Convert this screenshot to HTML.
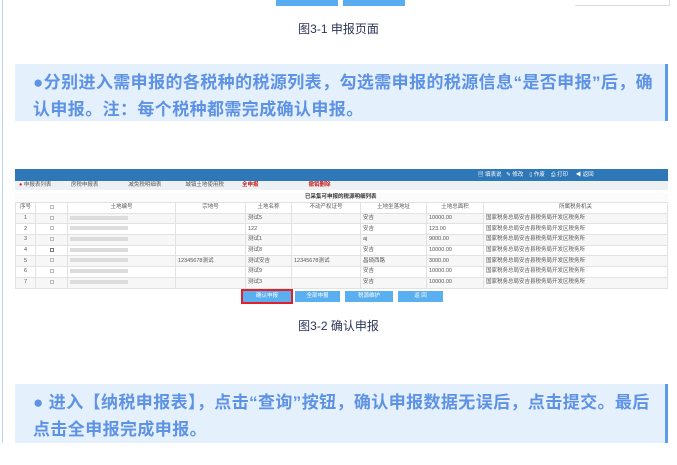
<!DOCTYPE html>
<html><head><meta charset="utf-8"><style>
*{margin:0;padding:0;box-sizing:border-box}
body{width:677px;height:465px;background:#fff;position:relative;overflow:hidden;font-family:"Liberation Sans","Noto Sans CJK SC",sans-serif}
.a{position:absolute}
.cap{position:absolute;left:0;width:677px;text-align:center;font-size:12px;color:#2c3456}
.box{position:absolute;left:15px;width:653px;background:#e4f0fb;border-right:3px solid #5b9be8;color:#5e92e4;font-weight:bold;font-size:17px;line-height:27px;padding:5px 4px 0 18px;letter-spacing:0.4px}
.t{font-size:5.5px;color:#555;white-space:nowrap;line-height:10px}
table{border-collapse:collapse;position:absolute;left:15px;top:202px;width:653px;table-layout:fixed}
td{border:1px solid #e2e2e2;height:10.7px;font-size:5.5px;color:#555;padding:0 2px;white-space:nowrap;overflow:hidden;line-height:9px}
tr:nth-child(odd) td{background:#fff}
tr:nth-child(even) td{background:#f7f7f7}
.c{text-align:center}
.blur{display:inline-block;width:58px;height:4px;background:#dcdcdc;vertical-align:middle}
.cb{display:inline-block;width:4px;height:4px;border:1px solid #bbb;vertical-align:middle}
.btn{position:absolute;top:291px;height:11px;background:#5aaff0;color:#fff;font-size:5.5px;text-align:center;line-height:11px}
</style></head><body>
<div class="a" style="left:2px;top:0;width:1px;height:443px;background:#b9d3f2"></div>
<div class="a" style="left:276px;top:0;width:62px;height:6px;background:#58acf0"></div>
<div class="a" style="left:343px;top:0;width:62px;height:6px;background:#58acf0"></div>
<div class="a" style="left:575px;top:0;width:95px;height:6px;border-bottom:1px solid #ddd;border-right:1px solid #ddd"></div>
<div class="cap" style="top:20px">图3-1 申报页面</div>
<div class="box" style="top:64px;height:57px">●分别进入需申报的各税种的税源列表，勾选需申报的税源信息“是否申报”后，确认申报。注：每个税种都需完成确认申报。</div>

<div class="a" style="left:15px;top:169px;width:653px;height:12px;background:#2f78b8"></div>
<div class="a t" style="left:478px;top:170px;color:#fff">▤ 填表说 &nbsp;&nbsp;✎ 修改 &nbsp;&nbsp;&nbsp;▯ 作废 &nbsp;&nbsp;&nbsp;⎙ 打印 &nbsp;&nbsp;&nbsp;&nbsp;◀ 返回</div>
<div class="a" style="left:15px;top:181px;width:653px;height:9px;background:#eef1f4"></div>
<div class="a t" style="left:19px;top:180px"><span style="color:#e0201c">●</span> 申报表列表 <span style="margin-left:18px">房税申报表</span><span style="margin-left:30px">减免税明细表</span><span style="margin-left:24px">城镇土地使用税</span><span style="margin-left:18px;color:#c8201c;font-weight:bold">全申报</span><span style="margin-left:50px;color:#c8201c;font-weight:bold">撤销删除</span></div>
<div class="a" style="left:15px;top:193px;width:653px;height:9px;background:#fbfbfb"></div>
<div class="a t" style="left:305px;top:192px;font-weight:bold;color:#333">已采集可申报的税源明细列表</div>
<table>
<colgroup><col style="width:20px"><col style="width:32px"><col style="width:108px"><col style="width:70px"><col style="width:46px"><col style="width:69px"><col style="width:66px"><col style="width:57px"><col></colgroup>
<tr><td class="c">序号</td><td class="c"><span class="cb"></span></td><td class="c">土地编号</td><td class="c">宗地号</td><td class="c">土地名称</td><td class="c">不动产权证号</td><td class="c">土地坐落地址</td><td class="c">土地总面积</td><td class="c">所属税务机关</td></tr>
<tr><td class="c">1</td><td class="c"><span class="cb"></span></td><td><span class="blur"></span></td><td></td><td>测试5</td><td></td><td>安吉</td><td>10000.00</td><td>国家税务总局安吉县税务局开发区税务所</td></tr>
<tr><td class="c">2</td><td class="c"><span class="cb"></span></td><td><span class="blur"></span></td><td></td><td>122</td><td></td><td>安吉</td><td>123.00</td><td>国家税务总局安吉县税务局开发区税务所</td></tr>
<tr><td class="c">3</td><td class="c"><span class="cb"></span></td><td><span class="blur"></span></td><td></td><td>测试1</td><td></td><td>aj</td><td>9000.00</td><td>国家税务总局安吉县税务局开发区税务所</td></tr>
<tr><td class="c">4</td><td class="c"><span class="cb" style="border-color:#777"></span></td><td><span class="blur"></span></td><td></td><td>测试8</td><td></td><td>安吉</td><td>10000.00</td><td>国家税务总局安吉县税务局开发区税务所</td></tr>
<tr><td class="c">5</td><td class="c"><span class="cb"></span></td><td><span class="blur"></span></td><td>12345678测试</td><td>测试安吉</td><td>12345678测试</td><td>昌硕西路</td><td>3000.00</td><td>国家税务总局安吉县税务局开发区税务所</td></tr>
<tr><td class="c">6</td><td class="c"><span class="cb"></span></td><td><span class="blur"></span></td><td></td><td>测试9</td><td></td><td>安吉</td><td>10000.00</td><td>国家税务总局安吉县税务局开发区税务所</td></tr>
<tr><td class="c">7</td><td class="c"><span class="cb"></span></td><td><span class="blur"></span></td><td></td><td>测试3</td><td></td><td>安吉</td><td>10000.00</td><td>国家税务总局安吉县税务局开发区税务所</td></tr>
</table>
<div class="a" style="left:241px;top:289px;width:52px;height:15px;border:2px solid #e0202a"></div>
<div class="btn" style="left:243px;width:48px">确认申报</div>
<div class="btn" style="left:295px;width:45px">全部申报</div>
<div class="btn" style="left:345px;width:48px">税源维护</div>
<div class="btn" style="left:398px;width:45px">返 回</div>

<div class="cap" style="top:317px">图3-2 确认申报</div>
<div class="box" style="top:384px;height:59px">● 进入【纳税申报表】，点击“查询”按钮，确认申报数据无误后，点击提交。最后点击全申报完成申报。</div>
</body></html>
